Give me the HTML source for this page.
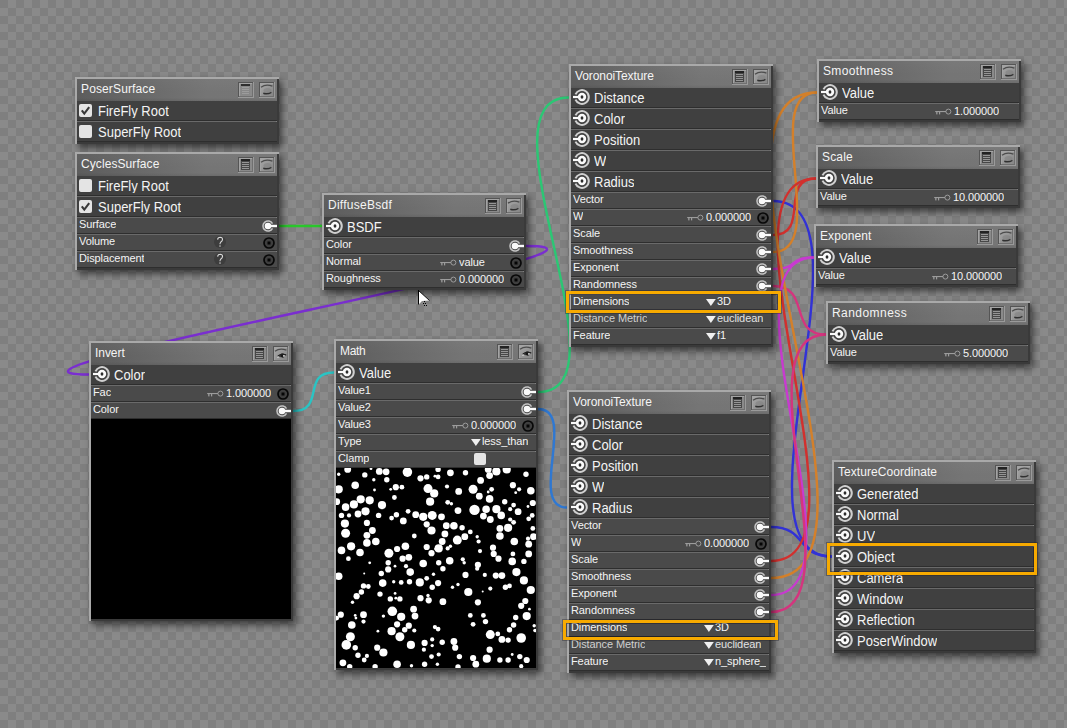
<!DOCTYPE html>
<html><head><meta charset="utf-8"><style>
html,body{margin:0;padding:0;}
body{width:1067px;height:728px;overflow:hidden;position:relative;font-family:"Liberation Sans",sans-serif;color:#f4f4f4;}
.abs{position:absolute;}
.node{position:absolute;width:204px;background:#404040;box-shadow:3px 4px 7px rgba(0,0,0,0.55);}
.bl{position:absolute;left:0;top:0;width:2px;background:#a9a9a9;}
.bt{position:absolute;left:0;top:0;height:2px;background:#a9a9a9;}
.br{position:absolute;right:0;top:2px;width:2px;background:#3a3a3a;}
.bb{position:absolute;left:2px;bottom:0;height:2px;background:#3a3a3a;}
.hdr{position:absolute;left:2px;top:2px;width:200px;height:22px;background:linear-gradient(180deg,rgba(255,255,255,0.03) 0%,rgba(255,255,255,0) 60%,rgba(0,0,0,0) 85%,rgba(0,0,0,0.08) 100%),linear-gradient(100deg,#5c5c5c 0%,#6a6a6a 35%,#757575 65%,#767676 100%);}
.ht{position:absolute;left:4px;top:2px;font-size:12px;line-height:16px;white-space:pre;letter-spacing:0.05px;}
.btn{position:absolute;top:3px;width:16px;height:16px;}
.row{position:absolute;left:2px;width:200px;}
.big{background:#404040;}
.small{background:#4a4a4a;}
.sd{position:absolute;left:0;bottom:0;width:200px;height:1px;background:#2e2e2e;}
.sl{position:absolute;left:0;top:0;width:200px;height:1px;background:#6a6a6a;}
.sl:after{content:'';position:absolute;right:0;top:0;width:1px;height:1px;background:#7e7e7e;}
.bt13{position:absolute;font-size:13px;line-height:15px;height:13.6px;overflow:hidden;white-space:pre;transform:scaleY(1.08);transform-origin:0 3px;}
.st11{position:absolute;font-size:11px;line-height:13px;height:12.2px;overflow:hidden;white-space:pre;letter-spacing:-0.1px;}
.cb{position:absolute;width:13px;height:13px;border-radius:2px;background:#e4e4e4;}
svg.ic{position:absolute;overflow:visible;}
</style></head><body>

<svg class="abs" style="left:0;top:0" width="1067" height="728"><defs><pattern id="chk" width="16" height="16" patternUnits="userSpaceOnUse"><rect width="16" height="16" fill="#8a8a8a"/><rect width="8" height="8" fill="#7f7f7f"/><rect x="8" y="8" width="8" height="8" fill="#7f7f7f"/></pattern></defs><rect width="1067" height="728" fill="url(#chk)"/>
<path d="M322.0,226.0 C296.5,226.0 304.5,226.0 279.0,226.0" fill="none" stroke="#29c72b" stroke-width="2.4"/>
<path d="M89.0,374.5 C-65.0,374.5 680.0,246.0 526.0,246.0" fill="none" stroke="#7a2ed0" stroke-width="2.4"/>
<path d="M334.0,372.5 C301.0,372.5 326.0,411.0 293.0,411.0" fill="none" stroke="#2ac4c4" stroke-width="2.4"/>
<path d="M569.0,97.5 C473.0,97.5 634.0,392.0 538.0,392.0" fill="none" stroke="#2bc774" stroke-width="2.4"/>
<path d="M567.0,507.5 C527.0,507.5 578.0,409.0 538.0,409.0" fill="none" stroke="#2f78d2" stroke-width="2.4"/>
<path d="M832.0,556.5 C724.0,556.5 881.0,201.0 773.0,201.0" fill="none" stroke="#3232d6" stroke-width="2.4"/>
<path d="M816.0,178.5 C778.1,178.5 810.9,235.0 773.0,235.0" fill="none" stroke="#d2302e" stroke-width="2.4"/>
<path d="M817.0,92.5 C759.0,92.5 831.0,252.0 773.0,252.0" fill="none" stroke="#d4802a" stroke-width="2.4"/>
<path d="M814.0,257.5 C786.5,257.5 800.5,269.0 773.0,269.0" fill="none" stroke="#c83ad0" stroke-width="2.4"/>
<path d="M826.0,334.5 C787.3,334.5 811.7,286.0 773.0,286.0" fill="none" stroke="#d4357e" stroke-width="2.4"/>
<path d="M832.0,556.5 C795.4,556.5 807.6,527.0 771.0,527.0" fill="none" stroke="#3232d6" stroke-width="2.4"/>
<path d="M816.0,178.5 C705.0,178.5 882.0,561.0 771.0,561.0" fill="none" stroke="#d2302e" stroke-width="2.4"/>
<path d="M817.0,92.5 C677.0,92.5 911.0,578.0 771.0,578.0" fill="none" stroke="#d4802a" stroke-width="2.4"/>
<path d="M814.0,257.5 C713.0,257.5 872.0,595.0 771.0,595.0" fill="none" stroke="#c83ad0" stroke-width="2.4"/>
<path d="M826.0,334.5 C736.7,334.5 860.3,612.0 771.0,612.0" fill="none" stroke="#d4357e" stroke-width="2.4"/>
</svg>
<svg width="0" height="0" style="position:absolute"><defs>
<g id="so">
 <path d="M-6.5,-2.6 A6.9,6.9 0 1 1 -6.5,2.6" fill="none" stroke="#d0d0d0" stroke-width="2"/>
 <circle r="4.2" fill="#fafafa"/>
 <rect x="-9" y="-1.1" width="6" height="2.2" fill="#fafafa"/>
 <ellipse rx="1.4" ry="1.8" fill="#2a2a2a"/>
</g>
<g id="si">
 <path d="M4.5,-2.3 A5.05,5.05 0 1 0 4.5,2.3" fill="none" stroke="#c4c4c4" stroke-width="1.5"/>
 <circle r="3.3" fill="#fafafa"/>
 <rect x="2" y="-1.2" width="7" height="2.4" fill="#fafafa"/>
</g>
<g id="su">
 <circle r="5" fill="#3e3e3e" stroke="#080808" stroke-width="1.7"/>
 <rect x="-1.5" y="-1.5" width="3" height="3" fill="#050505"/>
</g>
<g id="key">
 <circle cx="13.4" cy="3.6" r="2.5" fill="none" stroke="#9c9c9c" stroke-width="1"/>
 <rect x="0.2" y="3" width="10.8" height="1.1" fill="#9c9c9c"/>
 <rect x="1.2" y="3" width="1.3" height="3.4" fill="#9c9c9c"/>
 <rect x="4" y="3" width="1.2" height="3.4" fill="#9c9c9c"/>
</g>
</defs></svg>
<div class="node" style="left:75px;top:77px;height:67px"><div class="hdr"><div class="ht" style="letter-spacing:0.13px">PoserSurface</div><svg class="btn" style="left:161px" width="16" height="16"><rect width="16" height="16" fill="#8a8a8a"/><rect width="16" height="1" fill="#555"/><rect width="1" height="16" fill="#555"/><rect y="15" width="16" height="1" fill="#9a9a9a"/><rect x="15" width="1" height="16" fill="#9a9a9a"/><rect x="1" y="1" width="14" height="1" fill="#a4a4a4"/><rect x="1" y="1" width="1" height="14" fill="#a4a4a4"/><rect x="1" y="14" width="14" height="1" fill="#707070"/><rect x="14" y="1" width="1" height="14" fill="#707070"/><rect x="3" y="2" width="9" height="11" fill="#878787"/><rect x="3" y="2" width="9" height="2" fill="#2e2e2e"/><rect x="4" y="5" width="7" height="1" fill="#9c9c9c"/><rect x="4" y="7" width="7" height="1" fill="#9c9c9c"/><rect x="4" y="9" width="7" height="1" fill="#9c9c9c"/><rect x="4" y="11" width="7" height="1" fill="#9c9c9c"/></svg><svg class="btn" style="left:182px" width="16" height="16"><rect width="16" height="16" fill="#8a8a8a"/><rect width="16" height="1" fill="#555"/><rect width="1" height="16" fill="#555"/><rect y="15" width="16" height="1" fill="#9a9a9a"/><rect x="15" width="1" height="16" fill="#9a9a9a"/><rect x="1" y="1" width="14" height="1" fill="#a4a4a4"/><rect x="1" y="1" width="1" height="14" fill="#a4a4a4"/><rect x="1" y="14" width="14" height="1" fill="#707070"/><rect x="14" y="1" width="1" height="14" fill="#707070"/><defs><linearGradient id="eg" x1="0" y1="0" x2="1" y2="1"><stop offset="0" stop-color="#a6a6a6"/><stop offset="1" stop-color="#868686"/></linearGradient></defs><rect x="2" y="2" width="12" height="12" fill="url(#eg)"/><path d="M2,5.2 Q7,1.6 13.4,4.2" fill="none" stroke="#4c4c4c" stroke-width="1.3"/><path d="M4.3,11.3 Q8.5,12.6 12.4,10.3" fill="none" stroke="#303030" stroke-width="1.5"/><ellipse cx="8.5" cy="8.5" rx="4" ry="2.5" fill="#7e7e7e" opacity="0.5"/></svg></div><div class="row big" style="top:24px;height:20px"><div class="sd"></div><div class="cb" style="left:2px;top:3px"></div><svg class="ic" style="left:2px;top:3px" width="13" height="13"><path d="M2.8,6.3 L5.3,9.6 L10.2,3.2" fill="none" stroke="#383838" stroke-width="2.1"/></svg><div class="bt13" style="left:21px;top:2px">FireFly Root</div></div><div class="row big" style="top:44px;height:21px"><div class="sl"></div><div class="sd"></div><div class="cb" style="left:2px;top:4px"></div><div class="bt13" style="left:21px;top:3px">SuperFly Root</div></div><div class="bl" style="height:67px"></div><div class="bt" style="width:204px"></div><div class="br" style="height:65px"></div><div class="bb" style="width:202px"></div></div>
<div class="node" style="left:75px;top:152px;height:118px"><div class="hdr"><div class="ht" style="letter-spacing:0.08px">CyclesSurface</div><svg class="btn" style="left:161px" width="16" height="16"><rect width="16" height="16" fill="#8a8a8a"/><rect width="16" height="1" fill="#555"/><rect width="1" height="16" fill="#555"/><rect y="15" width="16" height="1" fill="#9a9a9a"/><rect x="15" width="1" height="16" fill="#9a9a9a"/><rect x="1" y="1" width="14" height="1" fill="#a4a4a4"/><rect x="1" y="1" width="1" height="14" fill="#a4a4a4"/><rect x="1" y="14" width="14" height="1" fill="#707070"/><rect x="14" y="1" width="1" height="14" fill="#707070"/><rect x="3" y="2" width="9" height="11" fill="#474747"/><rect x="3" y="2" width="9" height="2" fill="#222"/><rect x="4" y="5" width="7" height="1" fill="#959595"/><rect x="4" y="7" width="7" height="1" fill="#959595"/><rect x="4" y="9" width="7" height="1" fill="#959595"/><rect x="4" y="11" width="7" height="1" fill="#959595"/></svg><svg class="btn" style="left:182px" width="16" height="16"><rect width="16" height="16" fill="#8a8a8a"/><rect width="16" height="1" fill="#555"/><rect width="1" height="16" fill="#555"/><rect y="15" width="16" height="1" fill="#9a9a9a"/><rect x="15" width="1" height="16" fill="#9a9a9a"/><rect x="1" y="1" width="14" height="1" fill="#a4a4a4"/><rect x="1" y="1" width="1" height="14" fill="#a4a4a4"/><rect x="1" y="14" width="14" height="1" fill="#707070"/><rect x="14" y="1" width="1" height="14" fill="#707070"/><defs><linearGradient id="eg" x1="0" y1="0" x2="1" y2="1"><stop offset="0" stop-color="#a6a6a6"/><stop offset="1" stop-color="#868686"/></linearGradient></defs><rect x="2" y="2" width="12" height="12" fill="url(#eg)"/><path d="M2,5.2 Q7,1.6 13.4,4.2" fill="none" stroke="#4c4c4c" stroke-width="1.3"/><path d="M4.3,11.3 Q8.5,12.6 12.4,10.3" fill="none" stroke="#303030" stroke-width="1.5"/><ellipse cx="8.5" cy="8.5" rx="4" ry="2.5" fill="#7e7e7e" opacity="0.5"/></svg></div><div class="row big" style="top:24px;height:20px"><div class="sd"></div><div class="cb" style="left:2px;top:3px"></div><div class="bt13" style="left:21px;top:2px">FireFly Root</div></div><div class="row big" style="top:44px;height:21px"><div class="sl"></div><div class="sd"></div><div class="cb" style="left:2px;top:4px"></div><svg class="ic" style="left:2px;top:4px" width="13" height="13"><path d="M2.8,6.3 L5.3,9.6 L10.2,3.2" fill="none" stroke="#383838" stroke-width="2.1"/></svg><div class="bt13" style="left:21px;top:3px">SuperFly Root</div></div><div class="row small" style="top:65px;height:17px"><div class="sl"></div><div class="sd"></div><div class="st11" style="left:2px;top:1px">Surface</div><svg class="ic" style="left:182.6px;top:1.9000000000000004px" width="16" height="14" viewBox="-8 -7 16 14"><use href="#si"/></svg></div><div class="row small" style="top:82px;height:17px"><div class="sl"></div><div class="sd"></div><div class="st11" style="left:2px;top:1px">Volume</div><svg class="ic" style="left:136.5px;top:1.4px" width="12" height="14" viewBox="0 0 12 14"><circle cx="6" cy="7" r="6" fill="#3d3d3d"/><path d="M3.6,4.6 Q3.8,2.3 6.2,2.3 Q8.6,2.4 8.5,4.6 Q8.4,6 6.6,7.3 Q6,7.8 6,9.2" fill="none" stroke="#dadada" stroke-width="1.1"/><rect x="5.4" y="10.4" width="1.2" height="1.3" fill="#dadada"/></svg><svg class="ic" style="left:183.9px;top:1.8000000000000007px" width="16" height="14" viewBox="-8 -7 16 14"><use href="#su"/></svg></div><div class="row small" style="top:99px;height:17px"><div class="sl"></div><div class="sd"></div><div class="st11" style="left:2px;top:1px">Displacement</div><svg class="ic" style="left:136.5px;top:1.4px" width="12" height="14" viewBox="0 0 12 14"><circle cx="6" cy="7" r="6" fill="#3d3d3d"/><path d="M3.6,4.6 Q3.8,2.3 6.2,2.3 Q8.6,2.4 8.5,4.6 Q8.4,6 6.6,7.3 Q6,7.8 6,9.2" fill="none" stroke="#dadada" stroke-width="1.1"/><rect x="5.4" y="10.4" width="1.2" height="1.3" fill="#dadada"/></svg><svg class="ic" style="left:183.9px;top:1.8000000000000007px" width="16" height="14" viewBox="-8 -7 16 14"><use href="#su"/></svg></div><div class="bl" style="height:118px"></div><div class="bt" style="width:204px"></div><div class="br" style="height:116px"></div><div class="bb" style="width:202px"></div></div>
<div class="node" style="left:322px;top:193px;height:97px"><div class="hdr"><div class="ht" style="letter-spacing:0.26px">DiffuseBsdf</div><svg class="btn" style="left:161px" width="16" height="16"><rect width="16" height="16" fill="#8a8a8a"/><rect width="16" height="1" fill="#555"/><rect width="1" height="16" fill="#555"/><rect y="15" width="16" height="1" fill="#9a9a9a"/><rect x="15" width="1" height="16" fill="#9a9a9a"/><rect x="1" y="1" width="14" height="1" fill="#a4a4a4"/><rect x="1" y="1" width="1" height="14" fill="#a4a4a4"/><rect x="1" y="14" width="14" height="1" fill="#707070"/><rect x="14" y="1" width="1" height="14" fill="#707070"/><rect x="3" y="2" width="9" height="11" fill="#474747"/><rect x="3" y="2" width="9" height="2" fill="#222"/><rect x="4" y="5" width="7" height="1" fill="#959595"/><rect x="4" y="7" width="7" height="1" fill="#959595"/><rect x="4" y="9" width="7" height="1" fill="#959595"/><rect x="4" y="11" width="7" height="1" fill="#959595"/></svg><svg class="btn" style="left:182px" width="16" height="16"><rect width="16" height="16" fill="#8a8a8a"/><rect width="16" height="1" fill="#555"/><rect width="1" height="16" fill="#555"/><rect y="15" width="16" height="1" fill="#9a9a9a"/><rect x="15" width="1" height="16" fill="#9a9a9a"/><rect x="1" y="1" width="14" height="1" fill="#a4a4a4"/><rect x="1" y="1" width="1" height="14" fill="#a4a4a4"/><rect x="1" y="14" width="14" height="1" fill="#707070"/><rect x="14" y="1" width="1" height="14" fill="#707070"/><defs><linearGradient id="eg" x1="0" y1="0" x2="1" y2="1"><stop offset="0" stop-color="#a6a6a6"/><stop offset="1" stop-color="#868686"/></linearGradient></defs><rect x="2" y="2" width="12" height="12" fill="url(#eg)"/><path d="M2,5.2 Q7,1.6 13.4,4.2" fill="none" stroke="#4c4c4c" stroke-width="1.3"/><path d="M4.3,11.3 Q8.5,12.6 12.4,10.3" fill="none" stroke="#303030" stroke-width="1.5"/><ellipse cx="8.5" cy="8.5" rx="4" ry="2.5" fill="#7e7e7e" opacity="0.5"/></svg></div><div class="row big" style="top:24px;height:20px"><div class="sd"></div><svg class="ic" style="left:1px;top:1.0px" width="20" height="16" viewBox="-10 -8 20 16"><use href="#so"/></svg><div class="bt13" style="left:23px;top:2px">BSDF</div></div><div class="row small" style="top:44px;height:17px"><div class="sl"></div><div class="sd"></div><div class="st11" style="left:2px;top:1px">Color</div><svg class="ic" style="left:182.6px;top:1.9000000000000004px" width="16" height="14" viewBox="-8 -7 16 14"><use href="#si"/></svg></div><div class="row small" style="top:61px;height:17px"><div class="sl"></div><div class="sd"></div><div class="st11" style="left:2px;top:1px">Normal</div><svg class="ic" style="left:116px;top:4.5px" width="17" height="8" viewBox="0 0 17 8"><use href="#key"/></svg><div class="st11" style="left:135px;top:2px">value</div><svg class="ic" style="left:183.9px;top:1.8000000000000007px" width="16" height="14" viewBox="-8 -7 16 14"><use href="#su"/></svg></div><div class="row small" style="top:78px;height:17px"><div class="sl"></div><div class="sd"></div><div class="st11" style="left:2px;top:1px">Roughness</div><svg class="ic" style="left:116px;top:4.5px" width="17" height="8" viewBox="0 0 17 8"><use href="#key"/></svg><div class="st11" style="left:135px;top:2px">0.000000</div><svg class="ic" style="left:183.9px;top:1.8000000000000007px" width="16" height="14" viewBox="-8 -7 16 14"><use href="#su"/></svg></div><div class="bl" style="height:97px"></div><div class="bt" style="width:204px"></div><div class="br" style="height:95px"></div><div class="bb" style="width:202px"></div></div>
<div class="node" style="left:569px;top:64px;height:283px"><div class="hdr"><div class="ht" style="letter-spacing:-0.09px">VoronoiTexture</div><svg class="btn" style="left:161px" width="16" height="16"><rect width="16" height="16" fill="#8a8a8a"/><rect width="16" height="1" fill="#555"/><rect width="1" height="16" fill="#555"/><rect y="15" width="16" height="1" fill="#9a9a9a"/><rect x="15" width="1" height="16" fill="#9a9a9a"/><rect x="1" y="1" width="14" height="1" fill="#a4a4a4"/><rect x="1" y="1" width="1" height="14" fill="#a4a4a4"/><rect x="1" y="14" width="14" height="1" fill="#707070"/><rect x="14" y="1" width="1" height="14" fill="#707070"/><rect x="3" y="2" width="9" height="11" fill="#474747"/><rect x="3" y="2" width="9" height="2" fill="#222"/><rect x="4" y="5" width="7" height="1" fill="#959595"/><rect x="4" y="7" width="7" height="1" fill="#959595"/><rect x="4" y="9" width="7" height="1" fill="#959595"/><rect x="4" y="11" width="7" height="1" fill="#959595"/></svg><svg class="btn" style="left:182px" width="16" height="16"><rect width="16" height="16" fill="#8a8a8a"/><rect width="16" height="1" fill="#555"/><rect width="1" height="16" fill="#555"/><rect y="15" width="16" height="1" fill="#9a9a9a"/><rect x="15" width="1" height="16" fill="#9a9a9a"/><rect x="1" y="1" width="14" height="1" fill="#a4a4a4"/><rect x="1" y="1" width="1" height="14" fill="#a4a4a4"/><rect x="1" y="14" width="14" height="1" fill="#707070"/><rect x="14" y="1" width="1" height="14" fill="#707070"/><defs><linearGradient id="eg" x1="0" y1="0" x2="1" y2="1"><stop offset="0" stop-color="#a6a6a6"/><stop offset="1" stop-color="#868686"/></linearGradient></defs><rect x="2" y="2" width="12" height="12" fill="url(#eg)"/><path d="M2,5.2 Q7,1.6 13.4,4.2" fill="none" stroke="#4c4c4c" stroke-width="1.3"/><path d="M4.3,11.3 Q8.5,12.6 12.4,10.3" fill="none" stroke="#303030" stroke-width="1.5"/><ellipse cx="8.5" cy="8.5" rx="4" ry="2.5" fill="#7e7e7e" opacity="0.5"/></svg></div><div class="row big" style="top:24px;height:20px"><div class="sd"></div><svg class="ic" style="left:1px;top:1.0px" width="20" height="16" viewBox="-10 -8 20 16"><use href="#so"/></svg><div class="bt13" style="left:23px;top:2px">Distance</div></div><div class="row big" style="top:44px;height:21px"><div class="sl"></div><div class="sd"></div><svg class="ic" style="left:1px;top:2.0px" width="20" height="16" viewBox="-10 -8 20 16"><use href="#so"/></svg><div class="bt13" style="left:23px;top:3px">Color</div></div><div class="row big" style="top:65px;height:21px"><div class="sl"></div><div class="sd"></div><svg class="ic" style="left:1px;top:2.0px" width="20" height="16" viewBox="-10 -8 20 16"><use href="#so"/></svg><div class="bt13" style="left:23px;top:3px">Position</div></div><div class="row big" style="top:86px;height:21px"><div class="sl"></div><div class="sd"></div><svg class="ic" style="left:1px;top:2.0px" width="20" height="16" viewBox="-10 -8 20 16"><use href="#so"/></svg><div class="bt13" style="left:23px;top:3px">W</div></div><div class="row big" style="top:107px;height:21px"><div class="sl"></div><div class="sd"></div><svg class="ic" style="left:1px;top:2.0px" width="20" height="16" viewBox="-10 -8 20 16"><use href="#so"/></svg><div class="bt13" style="left:23px;top:3px">Radius</div></div><div class="row small" style="top:128px;height:17px"><div class="sl"></div><div class="sd"></div><div class="st11" style="left:2px;top:1px">Vector</div><svg class="ic" style="left:182.6px;top:1.9000000000000004px" width="16" height="14" viewBox="-8 -7 16 14"><use href="#si"/></svg></div><div class="row small" style="top:145px;height:17px"><div class="sl"></div><div class="sd"></div><div class="st11" style="left:2px;top:1px">W</div><svg class="ic" style="left:116px;top:4.5px" width="17" height="8" viewBox="0 0 17 8"><use href="#key"/></svg><div class="st11" style="left:135px;top:2px">0.000000</div><svg class="ic" style="left:183.9px;top:1.8000000000000007px" width="16" height="14" viewBox="-8 -7 16 14"><use href="#su"/></svg></div><div class="row small" style="top:162px;height:17px"><div class="sl"></div><div class="sd"></div><div class="st11" style="left:2px;top:1px">Scale</div><svg class="ic" style="left:182.6px;top:1.9000000000000004px" width="16" height="14" viewBox="-8 -7 16 14"><use href="#si"/></svg></div><div class="row small" style="top:179px;height:17px"><div class="sl"></div><div class="sd"></div><div class="st11" style="left:2px;top:1px">Smoothness</div><svg class="ic" style="left:182.6px;top:1.9000000000000004px" width="16" height="14" viewBox="-8 -7 16 14"><use href="#si"/></svg></div><div class="row small" style="top:196px;height:17px"><div class="sl"></div><div class="sd"></div><div class="st11" style="left:2px;top:1px">Exponent</div><svg class="ic" style="left:182.6px;top:1.9000000000000004px" width="16" height="14" viewBox="-8 -7 16 14"><use href="#si"/></svg></div><div class="row small" style="top:213px;height:17px"><div class="sl"></div><div class="sd"></div><div class="st11" style="left:2px;top:1px">Randomness</div><svg class="ic" style="left:182.6px;top:1.9000000000000004px" width="16" height="14" viewBox="-8 -7 16 14"><use href="#si"/></svg></div><div class="row small" style="top:230px;height:17px"><div class="sl"></div><div class="sd"></div><div class="st11" style="left:2px;top:1px">Dimensions</div><svg class="ic" style="left:135.4px;top:5px" width="11" height="8"><path d="M0,0 L9.8,0 L4.9,7 Z" fill="#f0f0f0"/></svg><div class="st11" style="left:146px;top:1px;color:#f4f4f4">3D</div></div><div class="row small" style="top:247px;height:17px"><div class="sl"></div><div class="sd"></div><div class="st11" style="left:2px;top:1px;color:#d0d0d0">Distance Metric</div><svg class="ic" style="left:135.4px;top:5px" width="11" height="8"><path d="M0,0 L9.8,0 L4.9,7 Z" fill="#f0f0f0"/></svg><div class="st11" style="left:146px;top:1px;color:#e2e2e2">euclidean</div></div><div class="row small" style="top:264px;height:17px"><div class="sl"></div><div class="sd"></div><div class="st11" style="left:2px;top:1px">Feature</div><svg class="ic" style="left:135.4px;top:5px" width="11" height="8"><path d="M0,0 L9.8,0 L4.9,7 Z" fill="#f0f0f0"/></svg><div class="st11" style="left:146px;top:1px;color:#f4f4f4">f1</div></div><div class="bl" style="height:283px"></div><div class="bt" style="width:204px"></div><div class="br" style="height:281px"></div><div class="bb" style="width:202px"></div></div>
<div class="node" style="left:817px;top:59px;height:63px"><div class="hdr"><div class="ht" style="letter-spacing:0.37px">Smoothness</div><svg class="btn" style="left:161px" width="16" height="16"><rect width="16" height="16" fill="#8a8a8a"/><rect width="16" height="1" fill="#555"/><rect width="1" height="16" fill="#555"/><rect y="15" width="16" height="1" fill="#9a9a9a"/><rect x="15" width="1" height="16" fill="#9a9a9a"/><rect x="1" y="1" width="14" height="1" fill="#a4a4a4"/><rect x="1" y="1" width="1" height="14" fill="#a4a4a4"/><rect x="1" y="14" width="14" height="1" fill="#707070"/><rect x="14" y="1" width="1" height="14" fill="#707070"/><rect x="3" y="2" width="9" height="11" fill="#474747"/><rect x="3" y="2" width="9" height="2" fill="#222"/><rect x="4" y="5" width="7" height="1" fill="#959595"/><rect x="4" y="7" width="7" height="1" fill="#959595"/><rect x="4" y="9" width="7" height="1" fill="#959595"/><rect x="4" y="11" width="7" height="1" fill="#959595"/></svg><svg class="btn" style="left:182px" width="16" height="16"><rect width="16" height="16" fill="#8a8a8a"/><rect width="16" height="1" fill="#555"/><rect width="1" height="16" fill="#555"/><rect y="15" width="16" height="1" fill="#9a9a9a"/><rect x="15" width="1" height="16" fill="#9a9a9a"/><rect x="1" y="1" width="14" height="1" fill="#a4a4a4"/><rect x="1" y="1" width="1" height="14" fill="#a4a4a4"/><rect x="1" y="14" width="14" height="1" fill="#707070"/><rect x="14" y="1" width="1" height="14" fill="#707070"/><defs><linearGradient id="eg" x1="0" y1="0" x2="1" y2="1"><stop offset="0" stop-color="#a6a6a6"/><stop offset="1" stop-color="#868686"/></linearGradient></defs><rect x="2" y="2" width="12" height="12" fill="url(#eg)"/><path d="M2,5.2 Q7,1.6 13.4,4.2" fill="none" stroke="#4c4c4c" stroke-width="1.3"/><path d="M4.3,11.3 Q8.5,12.6 12.4,10.3" fill="none" stroke="#303030" stroke-width="1.5"/><ellipse cx="8.5" cy="8.5" rx="4" ry="2.5" fill="#7e7e7e" opacity="0.5"/></svg></div><div class="row big" style="top:24px;height:20px"><div class="sd"></div><svg class="ic" style="left:1px;top:1.0px" width="20" height="16" viewBox="-10 -8 20 16"><use href="#so"/></svg><div class="bt13" style="left:23px;top:2px">Value</div></div><div class="row small" style="top:44px;height:17px"><div class="sl"></div><div class="sd"></div><div class="st11" style="left:2px;top:1px">Value</div><svg class="ic" style="left:116px;top:4.5px" width="17" height="8" viewBox="0 0 17 8"><use href="#key"/></svg><div class="st11" style="left:135px;top:2px">1.000000</div></div><div class="bl" style="height:63px"></div><div class="bt" style="width:204px"></div><div class="br" style="height:61px"></div><div class="bb" style="width:202px"></div></div>
<div class="node" style="left:816px;top:145px;height:63px"><div class="hdr"><div class="ht" style="letter-spacing:0.15px">Scale</div><svg class="btn" style="left:161px" width="16" height="16"><rect width="16" height="16" fill="#8a8a8a"/><rect width="16" height="1" fill="#555"/><rect width="1" height="16" fill="#555"/><rect y="15" width="16" height="1" fill="#9a9a9a"/><rect x="15" width="1" height="16" fill="#9a9a9a"/><rect x="1" y="1" width="14" height="1" fill="#a4a4a4"/><rect x="1" y="1" width="1" height="14" fill="#a4a4a4"/><rect x="1" y="14" width="14" height="1" fill="#707070"/><rect x="14" y="1" width="1" height="14" fill="#707070"/><rect x="3" y="2" width="9" height="11" fill="#474747"/><rect x="3" y="2" width="9" height="2" fill="#222"/><rect x="4" y="5" width="7" height="1" fill="#959595"/><rect x="4" y="7" width="7" height="1" fill="#959595"/><rect x="4" y="9" width="7" height="1" fill="#959595"/><rect x="4" y="11" width="7" height="1" fill="#959595"/></svg><svg class="btn" style="left:182px" width="16" height="16"><rect width="16" height="16" fill="#8a8a8a"/><rect width="16" height="1" fill="#555"/><rect width="1" height="16" fill="#555"/><rect y="15" width="16" height="1" fill="#9a9a9a"/><rect x="15" width="1" height="16" fill="#9a9a9a"/><rect x="1" y="1" width="14" height="1" fill="#a4a4a4"/><rect x="1" y="1" width="1" height="14" fill="#a4a4a4"/><rect x="1" y="14" width="14" height="1" fill="#707070"/><rect x="14" y="1" width="1" height="14" fill="#707070"/><defs><linearGradient id="eg" x1="0" y1="0" x2="1" y2="1"><stop offset="0" stop-color="#a6a6a6"/><stop offset="1" stop-color="#868686"/></linearGradient></defs><rect x="2" y="2" width="12" height="12" fill="url(#eg)"/><path d="M2,5.2 Q7,1.6 13.4,4.2" fill="none" stroke="#4c4c4c" stroke-width="1.3"/><path d="M4.3,11.3 Q8.5,12.6 12.4,10.3" fill="none" stroke="#303030" stroke-width="1.5"/><ellipse cx="8.5" cy="8.5" rx="4" ry="2.5" fill="#7e7e7e" opacity="0.5"/></svg></div><div class="row big" style="top:24px;height:20px"><div class="sd"></div><svg class="ic" style="left:1px;top:1.0px" width="20" height="16" viewBox="-10 -8 20 16"><use href="#so"/></svg><div class="bt13" style="left:23px;top:2px">Value</div></div><div class="row small" style="top:44px;height:17px"><div class="sl"></div><div class="sd"></div><div class="st11" style="left:2px;top:1px">Value</div><svg class="ic" style="left:116px;top:4.5px" width="17" height="8" viewBox="0 0 17 8"><use href="#key"/></svg><div class="st11" style="left:135px;top:2px">10.000000</div></div><div class="bl" style="height:63px"></div><div class="bt" style="width:204px"></div><div class="br" style="height:61px"></div><div class="bb" style="width:202px"></div></div>
<div class="node" style="left:814px;top:224px;height:63px"><div class="hdr"><div class="ht" style="letter-spacing:0.09px">Exponent</div><svg class="btn" style="left:161px" width="16" height="16"><rect width="16" height="16" fill="#8a8a8a"/><rect width="16" height="1" fill="#555"/><rect width="1" height="16" fill="#555"/><rect y="15" width="16" height="1" fill="#9a9a9a"/><rect x="15" width="1" height="16" fill="#9a9a9a"/><rect x="1" y="1" width="14" height="1" fill="#a4a4a4"/><rect x="1" y="1" width="1" height="14" fill="#a4a4a4"/><rect x="1" y="14" width="14" height="1" fill="#707070"/><rect x="14" y="1" width="1" height="14" fill="#707070"/><rect x="3" y="2" width="9" height="11" fill="#474747"/><rect x="3" y="2" width="9" height="2" fill="#222"/><rect x="4" y="5" width="7" height="1" fill="#959595"/><rect x="4" y="7" width="7" height="1" fill="#959595"/><rect x="4" y="9" width="7" height="1" fill="#959595"/><rect x="4" y="11" width="7" height="1" fill="#959595"/></svg><svg class="btn" style="left:182px" width="16" height="16"><rect width="16" height="16" fill="#8a8a8a"/><rect width="16" height="1" fill="#555"/><rect width="1" height="16" fill="#555"/><rect y="15" width="16" height="1" fill="#9a9a9a"/><rect x="15" width="1" height="16" fill="#9a9a9a"/><rect x="1" y="1" width="14" height="1" fill="#a4a4a4"/><rect x="1" y="1" width="1" height="14" fill="#a4a4a4"/><rect x="1" y="14" width="14" height="1" fill="#707070"/><rect x="14" y="1" width="1" height="14" fill="#707070"/><defs><linearGradient id="eg" x1="0" y1="0" x2="1" y2="1"><stop offset="0" stop-color="#a6a6a6"/><stop offset="1" stop-color="#868686"/></linearGradient></defs><rect x="2" y="2" width="12" height="12" fill="url(#eg)"/><path d="M2,5.2 Q7,1.6 13.4,4.2" fill="none" stroke="#4c4c4c" stroke-width="1.3"/><path d="M4.3,11.3 Q8.5,12.6 12.4,10.3" fill="none" stroke="#303030" stroke-width="1.5"/><ellipse cx="8.5" cy="8.5" rx="4" ry="2.5" fill="#7e7e7e" opacity="0.5"/></svg></div><div class="row big" style="top:24px;height:20px"><div class="sd"></div><svg class="ic" style="left:1px;top:1.0px" width="20" height="16" viewBox="-10 -8 20 16"><use href="#so"/></svg><div class="bt13" style="left:23px;top:2px">Value</div></div><div class="row small" style="top:44px;height:17px"><div class="sl"></div><div class="sd"></div><div class="st11" style="left:2px;top:1px">Value</div><svg class="ic" style="left:116px;top:4.5px" width="17" height="8" viewBox="0 0 17 8"><use href="#key"/></svg><div class="st11" style="left:135px;top:2px">10.000000</div></div><div class="bl" style="height:63px"></div><div class="bt" style="width:204px"></div><div class="br" style="height:61px"></div><div class="bb" style="width:202px"></div></div>
<div class="node" style="left:826px;top:301px;height:63px"><div class="hdr"><div class="ht" style="letter-spacing:0.45px">Randomness</div><svg class="btn" style="left:161px" width="16" height="16"><rect width="16" height="16" fill="#8a8a8a"/><rect width="16" height="1" fill="#555"/><rect width="1" height="16" fill="#555"/><rect y="15" width="16" height="1" fill="#9a9a9a"/><rect x="15" width="1" height="16" fill="#9a9a9a"/><rect x="1" y="1" width="14" height="1" fill="#a4a4a4"/><rect x="1" y="1" width="1" height="14" fill="#a4a4a4"/><rect x="1" y="14" width="14" height="1" fill="#707070"/><rect x="14" y="1" width="1" height="14" fill="#707070"/><rect x="3" y="2" width="9" height="11" fill="#474747"/><rect x="3" y="2" width="9" height="2" fill="#222"/><rect x="4" y="5" width="7" height="1" fill="#959595"/><rect x="4" y="7" width="7" height="1" fill="#959595"/><rect x="4" y="9" width="7" height="1" fill="#959595"/><rect x="4" y="11" width="7" height="1" fill="#959595"/></svg><svg class="btn" style="left:182px" width="16" height="16"><rect width="16" height="16" fill="#8a8a8a"/><rect width="16" height="1" fill="#555"/><rect width="1" height="16" fill="#555"/><rect y="15" width="16" height="1" fill="#9a9a9a"/><rect x="15" width="1" height="16" fill="#9a9a9a"/><rect x="1" y="1" width="14" height="1" fill="#a4a4a4"/><rect x="1" y="1" width="1" height="14" fill="#a4a4a4"/><rect x="1" y="14" width="14" height="1" fill="#707070"/><rect x="14" y="1" width="1" height="14" fill="#707070"/><defs><linearGradient id="eg" x1="0" y1="0" x2="1" y2="1"><stop offset="0" stop-color="#a6a6a6"/><stop offset="1" stop-color="#868686"/></linearGradient></defs><rect x="2" y="2" width="12" height="12" fill="url(#eg)"/><path d="M2,5.2 Q7,1.6 13.4,4.2" fill="none" stroke="#4c4c4c" stroke-width="1.3"/><path d="M4.3,11.3 Q8.5,12.6 12.4,10.3" fill="none" stroke="#303030" stroke-width="1.5"/><ellipse cx="8.5" cy="8.5" rx="4" ry="2.5" fill="#7e7e7e" opacity="0.5"/></svg></div><div class="row big" style="top:24px;height:20px"><div class="sd"></div><svg class="ic" style="left:1px;top:1.0px" width="20" height="16" viewBox="-10 -8 20 16"><use href="#so"/></svg><div class="bt13" style="left:23px;top:2px">Value</div></div><div class="row small" style="top:44px;height:17px"><div class="sl"></div><div class="sd"></div><div class="st11" style="left:2px;top:1px">Value</div><svg class="ic" style="left:116px;top:4.5px" width="17" height="8" viewBox="0 0 17 8"><use href="#key"/></svg><div class="st11" style="left:135px;top:2px">5.000000</div></div><div class="bl" style="height:63px"></div><div class="bt" style="width:204px"></div><div class="br" style="height:61px"></div><div class="bb" style="width:202px"></div></div>
<div class="node" style="left:89px;top:341px;height:280px"><div class="hdr"><div class="ht" style="letter-spacing:-0.05px">Invert</div><svg class="btn" style="left:161px" width="16" height="16"><rect width="16" height="16" fill="#8a8a8a"/><rect width="16" height="1" fill="#555"/><rect width="1" height="16" fill="#555"/><rect y="15" width="16" height="1" fill="#9a9a9a"/><rect x="15" width="1" height="16" fill="#9a9a9a"/><rect x="1" y="1" width="14" height="1" fill="#a4a4a4"/><rect x="1" y="1" width="1" height="14" fill="#a4a4a4"/><rect x="1" y="14" width="14" height="1" fill="#707070"/><rect x="14" y="1" width="1" height="14" fill="#707070"/><rect x="3" y="2" width="9" height="11" fill="#474747"/><rect x="3" y="2" width="9" height="2" fill="#222"/><rect x="4" y="5" width="7" height="1" fill="#959595"/><rect x="4" y="7" width="7" height="1" fill="#959595"/><rect x="4" y="9" width="7" height="1" fill="#959595"/><rect x="4" y="11" width="7" height="1" fill="#959595"/></svg><svg class="btn" style="left:182px" width="16" height="16"><rect width="16" height="16" fill="#8a8a8a"/><rect width="16" height="1" fill="#555"/><rect width="1" height="16" fill="#555"/><rect y="15" width="16" height="1" fill="#9a9a9a"/><rect x="15" width="1" height="16" fill="#9a9a9a"/><rect x="1" y="1" width="14" height="1" fill="#a4a4a4"/><rect x="1" y="1" width="1" height="14" fill="#a4a4a4"/><rect x="1" y="14" width="14" height="1" fill="#707070"/><rect x="14" y="1" width="1" height="14" fill="#707070"/><defs><linearGradient id="eg" x1="0" y1="0" x2="1" y2="1"><stop offset="0" stop-color="#a6a6a6"/><stop offset="1" stop-color="#868686"/></linearGradient></defs><rect x="2" y="2" width="12" height="12" fill="url(#eg)"/><path d="M2,5.2 Q7,1.6 13.4,4.2" fill="none" stroke="#4c4c4c" stroke-width="1.3"/><path d="M4.6,10.2 Q8.6,6.6 13.3,9 Q9.6,12.6 4.6,10.2 Z" fill="#3a3a3a"/><circle cx="9.8" cy="9.6" r="2.1" fill="#181818"/><rect x="10.2" y="8.9" width="1.5" height="1.9" fill="#e4e4e4"/><rect x="4" y="10.4" width="2.2" height="1.6" fill="#bdbdbd"/><path d="M4.6,9.9 Q8.6,6.4 13.3,8.8" fill="none" stroke="#222" stroke-width="1"/></svg></div><div class="row big" style="top:24px;height:20px"><div class="sd"></div><svg class="ic" style="left:1px;top:1.0px" width="20" height="16" viewBox="-10 -8 20 16"><use href="#so"/></svg><div class="bt13" style="left:23px;top:2px">Color</div></div><div class="row small" style="top:44px;height:17px"><div class="sl"></div><div class="sd"></div><div class="st11" style="left:2px;top:1px">Fac</div><svg class="ic" style="left:116px;top:4.5px" width="17" height="8" viewBox="0 0 17 8"><use href="#key"/></svg><div class="st11" style="left:135px;top:2px">1.000000</div><svg class="ic" style="left:183.9px;top:1.8000000000000007px" width="16" height="14" viewBox="-8 -7 16 14"><use href="#su"/></svg></div><div class="row small" style="top:61px;height:17px"><div class="sl"></div><div class="sd"></div><div class="st11" style="left:2px;top:1px">Color</div><svg class="ic" style="left:182.6px;top:1.9000000000000004px" width="16" height="14" viewBox="-8 -7 16 14"><use href="#si"/></svg></div><div class="abs" style="left:2px;top:78px;width:200px;height:200px;background:#000"></div><div class="bl" style="height:280px"></div><div class="bt" style="width:204px"></div><div class="br" style="height:278px"></div><div class="bb" style="width:202px"></div></div>
<div class="node" style="left:334px;top:339px;height:331px"><div class="hdr"><div class="ht" style="letter-spacing:-0.30px">Math</div><svg class="btn" style="left:161px" width="16" height="16"><rect width="16" height="16" fill="#8a8a8a"/><rect width="16" height="1" fill="#555"/><rect width="1" height="16" fill="#555"/><rect y="15" width="16" height="1" fill="#9a9a9a"/><rect x="15" width="1" height="16" fill="#9a9a9a"/><rect x="1" y="1" width="14" height="1" fill="#a4a4a4"/><rect x="1" y="1" width="1" height="14" fill="#a4a4a4"/><rect x="1" y="14" width="14" height="1" fill="#707070"/><rect x="14" y="1" width="1" height="14" fill="#707070"/><rect x="3" y="2" width="9" height="11" fill="#474747"/><rect x="3" y="2" width="9" height="2" fill="#222"/><rect x="4" y="5" width="7" height="1" fill="#959595"/><rect x="4" y="7" width="7" height="1" fill="#959595"/><rect x="4" y="9" width="7" height="1" fill="#959595"/><rect x="4" y="11" width="7" height="1" fill="#959595"/></svg><svg class="btn" style="left:182px" width="16" height="16"><rect width="16" height="16" fill="#8a8a8a"/><rect width="16" height="1" fill="#555"/><rect width="1" height="16" fill="#555"/><rect y="15" width="16" height="1" fill="#9a9a9a"/><rect x="15" width="1" height="16" fill="#9a9a9a"/><rect x="1" y="1" width="14" height="1" fill="#a4a4a4"/><rect x="1" y="1" width="1" height="14" fill="#a4a4a4"/><rect x="1" y="14" width="14" height="1" fill="#707070"/><rect x="14" y="1" width="1" height="14" fill="#707070"/><defs><linearGradient id="eg" x1="0" y1="0" x2="1" y2="1"><stop offset="0" stop-color="#a6a6a6"/><stop offset="1" stop-color="#868686"/></linearGradient></defs><rect x="2" y="2" width="12" height="12" fill="url(#eg)"/><path d="M2,5.2 Q7,1.6 13.4,4.2" fill="none" stroke="#4c4c4c" stroke-width="1.3"/><path d="M4.6,10.2 Q8.6,6.6 13.3,9 Q9.6,12.6 4.6,10.2 Z" fill="#3a3a3a"/><circle cx="9.8" cy="9.6" r="2.1" fill="#181818"/><rect x="10.2" y="8.9" width="1.5" height="1.9" fill="#e4e4e4"/><rect x="4" y="10.4" width="2.2" height="1.6" fill="#bdbdbd"/><path d="M4.6,9.9 Q8.6,6.4 13.3,8.8" fill="none" stroke="#222" stroke-width="1"/></svg></div><div class="row big" style="top:24px;height:20px"><div class="sd"></div><svg class="ic" style="left:1px;top:1.0px" width="20" height="16" viewBox="-10 -8 20 16"><use href="#so"/></svg><div class="bt13" style="left:23px;top:2px">Value</div></div><div class="row small" style="top:44px;height:17px"><div class="sl"></div><div class="sd"></div><div class="st11" style="left:2px;top:1px">Value1</div><svg class="ic" style="left:182.6px;top:1.9000000000000004px" width="16" height="14" viewBox="-8 -7 16 14"><use href="#si"/></svg></div><div class="row small" style="top:61px;height:17px"><div class="sl"></div><div class="sd"></div><div class="st11" style="left:2px;top:1px">Value2</div><svg class="ic" style="left:182.6px;top:1.9000000000000004px" width="16" height="14" viewBox="-8 -7 16 14"><use href="#si"/></svg></div><div class="row small" style="top:78px;height:17px"><div class="sl"></div><div class="sd"></div><div class="st11" style="left:2px;top:1px">Value3</div><svg class="ic" style="left:116px;top:4.5px" width="17" height="8" viewBox="0 0 17 8"><use href="#key"/></svg><div class="st11" style="left:135px;top:2px">0.000000</div><svg class="ic" style="left:183.9px;top:1.8000000000000007px" width="16" height="14" viewBox="-8 -7 16 14"><use href="#su"/></svg></div><div class="row small" style="top:95px;height:17px"><div class="sl"></div><div class="sd"></div><div class="st11" style="left:2px;top:1px">Type</div><svg class="ic" style="left:135.4px;top:5px" width="11" height="8"><path d="M0,0 L9.8,0 L4.9,7 Z" fill="#f0f0f0"/></svg><div class="st11" style="left:146px;top:1px;color:#f4f4f4">less_than</div></div><div class="row small" style="top:112px;height:17px"><div class="sl"></div><div class="sd"></div><div class="st11" style="left:2px;top:1px">Clamp</div><div class="cb" style="left:138px;top:2px;width:12px;height:12px"></div></div><svg class="abs" style="left:2px;top:129px" width="200" height="200"><rect width="200" height="200" fill="#000"/><circle cx="11.7" cy="1.4" r="3.4" fill="#fff"/><circle cx="2.7" cy="6.2" r="1.7" fill="#fff"/><circle cx="28.8" cy="6.9" r="2.7" fill="#fff"/><circle cx="43.3" cy="3.4" r="3.4" fill="#fff"/><circle cx="50.1" cy="3.8" r="3.4" fill="#fff"/><circle cx="71.4" cy="4.1" r="4.8" fill="#fff"/><circle cx="35" cy="0.7" r="1.4" fill="#fff"/><circle cx="37.8" cy="11.7" r="1.7" fill="#fff"/><circle cx="50.8" cy="11.7" r="2.7" fill="#fff"/><circle cx="84.5" cy="10.3" r="3.1" fill="#fff"/><circle cx="90.7" cy="8.9" r="2.7" fill="#fff"/><circle cx="98.9" cy="8.2" r="1.4" fill="#fff"/><circle cx="19.2" cy="17.2" r="3.8" fill="#fff"/><circle cx="2.7" cy="21.3" r="4.1" fill="#fff"/><circle cx="59.8" cy="19.2" r="3.1" fill="#fff"/><circle cx="65.9" cy="19.2" r="2.4" fill="#fff"/><circle cx="54.7" cy="21.3" r="1.4" fill="#fff"/><circle cx="38.5" cy="22" r="1.4" fill="#fff"/><circle cx="92" cy="20.6" r="4.5" fill="#fff"/><circle cx="98.2" cy="25.4" r="4.1" fill="#fff"/><circle cx="58.4" cy="29.5" r="2.4" fill="#fff"/><circle cx="24.7" cy="31.3" r="4.1" fill="#fff"/><circle cx="33.7" cy="32.3" r="4.1" fill="#fff"/><circle cx="0.7" cy="33.7" r="3.4" fill="#fff"/><circle cx="17.9" cy="36.4" r="4.1" fill="#fff"/><circle cx="9.6" cy="39.1" r="3.8" fill="#fff"/><circle cx="46" cy="37.1" r="4.1" fill="#fff"/><circle cx="94.1" cy="33.7" r="4.1" fill="#fff"/><circle cx="29.5" cy="43.3" r="4.1" fill="#fff"/><circle cx="22" cy="46" r="3.4" fill="#fff"/><circle cx="5.5" cy="47.4" r="2.7" fill="#fff"/><circle cx="13" cy="47.4" r="2.1" fill="#fff"/><circle cx="42.6" cy="47.4" r="2.7" fill="#fff"/><circle cx="72.1" cy="43.3" r="2.4" fill="#fff"/><circle cx="60.4" cy="46.7" r="2.7" fill="#fff"/><circle cx="55.6" cy="50.1" r="2.4" fill="#fff"/><circle cx="79.7" cy="46.7" r="3.4" fill="#fff"/><circle cx="87.2" cy="48.8" r="4.1" fill="#fff"/><circle cx="96.2" cy="47.4" r="4.5" fill="#fff"/><circle cx="67.3" cy="52.9" r="3.4" fill="#fff"/><circle cx="8.9" cy="55.6" r="4.1" fill="#fff"/><circle cx="30.9" cy="54.9" r="3.1" fill="#fff"/><circle cx="90.7" cy="56.3" r="3.1" fill="#fff"/><circle cx="95.5" cy="62.5" r="4.1" fill="#fff"/><circle cx="9.6" cy="65.2" r="4.5" fill="#fff"/><circle cx="36.4" cy="62.5" r="3.4" fill="#fff"/><circle cx="30.9" cy="67.3" r="3.4" fill="#fff"/><circle cx="78.3" cy="68" r="2.4" fill="#fff"/><circle cx="30.9" cy="74.9" r="3.8" fill="#fff"/><circle cx="39.8" cy="73.5" r="3.8" fill="#fff"/><circle cx="15.1" cy="78.3" r="4.1" fill="#fff"/><circle cx="5.5" cy="82.4" r="3.8" fill="#fff"/><circle cx="24" cy="84.5" r="3.8" fill="#fff"/><circle cx="52.9" cy="85.2" r="4.5" fill="#fff"/><circle cx="61.1" cy="81" r="3.1" fill="#fff"/><circle cx="69.4" cy="78.3" r="3.8" fill="#fff"/><circle cx="90.7" cy="79" r="3.1" fill="#fff"/><circle cx="95.5" cy="85.2" r="3.1" fill="#fff"/><circle cx="12.4" cy="90.7" r="2.4" fill="#fff"/><circle cx="66.6" cy="90.7" r="3.1" fill="#fff"/><circle cx="72.8" cy="89.3" r="3.4" fill="#fff"/><circle cx="33.7" cy="94.8" r="1.4" fill="#fff"/><circle cx="52.2" cy="94.8" r="2.7" fill="#fff"/><circle cx="87.2" cy="95.5" r="3.8" fill="#fff"/><circle cx="70" cy="98.2" r="2.1" fill="#fff"/><circle cx="59" cy="98.2" r="1.4" fill="#fff"/><circle cx="99.6" cy="81" r="1.4" fill="#fff"/><circle cx="102.1" cy="1.4" r="2.7" fill="#fff"/><circle cx="114.4" cy="4.8" r="3.4" fill="#fff"/><circle cx="129.5" cy="4.8" r="2.7" fill="#fff"/><circle cx="152.2" cy="1.4" r="3.4" fill="#fff"/><circle cx="160.4" cy="3.4" r="4.1" fill="#fff"/><circle cx="170.7" cy="1.4" r="4.1" fill="#fff"/><circle cx="153.6" cy="7.6" r="3.4" fill="#fff"/><circle cx="190" cy="6.2" r="2.7" fill="#fff"/><circle cx="102.1" cy="8.9" r="2.4" fill="#fff"/><circle cx="144.6" cy="12.4" r="3.4" fill="#fff"/><circle cx="111" cy="18.5" r="2.1" fill="#fff"/><circle cx="122.7" cy="23.4" r="3.4" fill="#fff"/><circle cx="137.1" cy="21.3" r="4.5" fill="#fff"/><circle cx="155.6" cy="21.3" r="2.4" fill="#fff"/><circle cx="152.2" cy="24" r="1.4" fill="#fff"/><circle cx="176.9" cy="17.2" r="3.1" fill="#fff"/><circle cx="183.1" cy="21.3" r="2.1" fill="#fff"/><circle cx="179.7" cy="24.7" r="1.4" fill="#fff"/><circle cx="194.8" cy="22.7" r="3.8" fill="#fff"/><circle cx="143.3" cy="28.2" r="3.4" fill="#fff"/><circle cx="153.6" cy="30.9" r="3.8" fill="#fff"/><circle cx="111.7" cy="34.3" r="2.4" fill="#fff"/><circle cx="115.4" cy="35.7" r="1.7" fill="#fff"/><circle cx="168.7" cy="33.7" r="2.7" fill="#fff"/><circle cx="177.6" cy="37.1" r="2.4" fill="#fff"/><circle cx="196.8" cy="35" r="3.1" fill="#fff"/><circle cx="192" cy="38.5" r="1.4" fill="#fff"/><circle cx="122" cy="42.6" r="3.4" fill="#fff"/><circle cx="138.5" cy="41.9" r="5.2" fill="#fff"/><circle cx="150.1" cy="41.2" r="3.8" fill="#fff"/><circle cx="160.4" cy="41.2" r="4.1" fill="#fff"/><circle cx="174.2" cy="41.2" r="2.1" fill="#fff"/><circle cx="182.1" cy="43.7" r="3.4" fill="#fff"/><circle cx="105.5" cy="48.8" r="3.4" fill="#fff"/><circle cx="147.4" cy="48.1" r="3.4" fill="#fff"/><circle cx="154.3" cy="51.5" r="3.4" fill="#fff"/><circle cx="165.2" cy="47.4" r="3.8" fill="#fff"/><circle cx="174.2" cy="51.5" r="2.1" fill="#fff"/><circle cx="177.6" cy="54.3" r="2.4" fill="#fff"/><circle cx="192.7" cy="50.8" r="2.4" fill="#fff"/><circle cx="196.2" cy="47.4" r="2.4" fill="#fff"/><circle cx="110.3" cy="57.7" r="3.4" fill="#fff"/><circle cx="117.9" cy="57.7" r="3.8" fill="#fff"/><circle cx="126.1" cy="59.8" r="2.7" fill="#fff"/><circle cx="134.3" cy="63.9" r="2.4" fill="#fff"/><circle cx="163.9" cy="60.4" r="3.4" fill="#fff"/><circle cx="172.1" cy="59.8" r="4.1" fill="#fff"/><circle cx="196.8" cy="60.4" r="2.4" fill="#fff"/><circle cx="108.9" cy="65.9" r="3.4" fill="#fff"/><circle cx="121.3" cy="72.1" r="4.5" fill="#fff"/><circle cx="128.8" cy="68.7" r="3.4" fill="#fff"/><circle cx="141.2" cy="68.7" r="1.7" fill="#fff"/><circle cx="142.6" cy="73.5" r="2.1" fill="#fff"/><circle cx="163.9" cy="68" r="3.8" fill="#fff"/><circle cx="178.3" cy="73.5" r="3.8" fill="#fff"/><circle cx="192" cy="70.7" r="2.1" fill="#fff"/><circle cx="197.5" cy="68.7" r="3.4" fill="#fff"/><circle cx="106.2" cy="73.5" r="3.4" fill="#fff"/><circle cx="102.7" cy="80.4" r="4.1" fill="#fff"/><circle cx="111.7" cy="80.4" r="2.1" fill="#fff"/><circle cx="114.4" cy="78.3" r="1.7" fill="#fff"/><circle cx="144" cy="83.1" r="2.1" fill="#fff"/><circle cx="157" cy="79.7" r="3.1" fill="#fff"/><circle cx="157.7" cy="85.9" r="3.1" fill="#fff"/><circle cx="162.5" cy="90.7" r="3.1" fill="#fff"/><circle cx="176.9" cy="85.9" r="2.4" fill="#fff"/><circle cx="192.7" cy="76.2" r="3.4" fill="#fff"/><circle cx="192.7" cy="85.9" r="3.4" fill="#fff"/><circle cx="113.7" cy="92.7" r="3.8" fill="#fff"/><circle cx="102.7" cy="94.8" r="2.7" fill="#fff"/><circle cx="126.8" cy="91.3" r="2.1" fill="#fff"/><circle cx="128.2" cy="94.8" r="1.7" fill="#fff"/><circle cx="141.9" cy="96.8" r="3.1" fill="#fff"/><circle cx="176.2" cy="93.4" r="3.8" fill="#fff"/><circle cx="187.9" cy="93.4" r="2.7" fill="#fff"/><circle cx="2.7" cy="108.2" r="3.8" fill="#fff"/><circle cx="45.3" cy="105.5" r="2.7" fill="#fff"/><circle cx="52.2" cy="101.4" r="3.1" fill="#fff"/><circle cx="74.2" cy="104.1" r="3.8" fill="#fff"/><circle cx="28.2" cy="105.5" r="1" fill="#fff"/><circle cx="46.7" cy="115.1" r="3.8" fill="#fff"/><circle cx="57.7" cy="113.7" r="1.7" fill="#fff"/><circle cx="65.2" cy="114.4" r="2.4" fill="#fff"/><circle cx="73.5" cy="113.7" r="2.7" fill="#fff"/><circle cx="83.8" cy="114.4" r="4.1" fill="#fff"/><circle cx="90.7" cy="110.3" r="2.4" fill="#fff"/><circle cx="97.5" cy="106.2" r="1.7" fill="#fff"/><circle cx="96.2" cy="119.2" r="2.7" fill="#fff"/><circle cx="27.5" cy="117.9" r="2.7" fill="#fff"/><circle cx="32.3" cy="118.5" r="2.4" fill="#fff"/><circle cx="25.4" cy="124" r="2.7" fill="#fff"/><circle cx="20.6" cy="128.2" r="3.1" fill="#fff"/><circle cx="44" cy="126.1" r="2.7" fill="#fff"/><circle cx="59.1" cy="125.4" r="1.4" fill="#fff"/><circle cx="16.5" cy="134.3" r="1.7" fill="#fff"/><circle cx="54.3" cy="130.9" r="2.7" fill="#fff"/><circle cx="59.8" cy="130.2" r="1.4" fill="#fff"/><circle cx="63.9" cy="130.9" r="2.7" fill="#fff"/><circle cx="84.5" cy="130.2" r="3.1" fill="#fff"/><circle cx="92" cy="127.5" r="1.7" fill="#fff"/><circle cx="92.7" cy="132.3" r="3.1" fill="#fff"/><circle cx="56.3" cy="143.3" r="4.8" fill="#fff"/><circle cx="77.6" cy="141.2" r="3.4" fill="#fff"/><circle cx="79" cy="148.1" r="3.4" fill="#fff"/><circle cx="65.2" cy="148.8" r="4.1" fill="#fff"/><circle cx="4.8" cy="146.7" r="3.1" fill="#fff"/><circle cx="0.7" cy="150.1" r="2.4" fill="#fff"/><circle cx="19.2" cy="147.4" r="1.4" fill="#fff"/><circle cx="19.9" cy="150.1" r="1.4" fill="#fff"/><circle cx="27.5" cy="146.7" r="3.4" fill="#fff"/><circle cx="27.5" cy="153.6" r="2.1" fill="#fff"/><circle cx="47.4" cy="148.1" r="1.7" fill="#fff"/><circle cx="15.8" cy="157" r="3.8" fill="#fff"/><circle cx="61.1" cy="156.3" r="3.1" fill="#fff"/><circle cx="72.8" cy="157.7" r="3.1" fill="#fff"/><circle cx="68.7" cy="161.8" r="2.7" fill="#fff"/><circle cx="78.3" cy="162.5" r="2.1" fill="#fff"/><circle cx="98.9" cy="159.1" r="2.1" fill="#fff"/><circle cx="55.6" cy="163.2" r="4.1" fill="#fff"/><circle cx="41.9" cy="163.2" r="1.4" fill="#fff"/><circle cx="14.4" cy="168.7" r="4.5" fill="#fff"/><circle cx="63.9" cy="168.7" r="4.5" fill="#fff"/><circle cx="10.3" cy="176.9" r="4.8" fill="#fff"/><circle cx="19.2" cy="179.7" r="2.7" fill="#fff"/><circle cx="41.2" cy="179.7" r="3.1" fill="#fff"/><circle cx="47.4" cy="184.5" r="4.1" fill="#fff"/><circle cx="74.9" cy="176.9" r="4.1" fill="#fff"/><circle cx="88.6" cy="174.9" r="3.1" fill="#fff"/><circle cx="96.2" cy="171.4" r="2.1" fill="#fff"/><circle cx="96.2" cy="177.6" r="1.7" fill="#fff"/><circle cx="87.9" cy="181.7" r="2.1" fill="#fff"/><circle cx="22" cy="187.2" r="2.7" fill="#fff"/><circle cx="30.9" cy="187.9" r="2.1" fill="#fff"/><circle cx="28.2" cy="192" r="2.4" fill="#fff"/><circle cx="6.9" cy="194.8" r="3.4" fill="#fff"/><circle cx="13.7" cy="198.6" r="2.7" fill="#fff"/><circle cx="39.1" cy="198.6" r="2.7" fill="#fff"/><circle cx="61.1" cy="196.2" r="3.8" fill="#fff"/><circle cx="95.5" cy="188.6" r="2.4" fill="#fff"/><circle cx="88.6" cy="196.2" r="2.7" fill="#fff"/><circle cx="75.5" cy="197.8" r="1.7" fill="#fff"/><circle cx="106.9" cy="100.7" r="2.7" fill="#fff"/><circle cx="141.2" cy="100.7" r="2.1" fill="#fff"/><circle cx="129.5" cy="106.9" r="3.1" fill="#fff"/><circle cx="148.8" cy="106.9" r="2.1" fill="#fff"/><circle cx="159.8" cy="107.6" r="3.1" fill="#fff"/><circle cx="165.9" cy="107.6" r="3.4" fill="#fff"/><circle cx="180.4" cy="104.1" r="4.1" fill="#fff"/><circle cx="187.9" cy="112.4" r="4.1" fill="#fff"/><circle cx="102.1" cy="115.1" r="3.1" fill="#fff"/><circle cx="116.5" cy="119.2" r="1.7" fill="#fff"/><circle cx="122" cy="116.5" r="1.7" fill="#fff"/><circle cx="132.3" cy="124" r="4.1" fill="#fff"/><circle cx="146.7" cy="123.4" r="1" fill="#fff"/><circle cx="154.3" cy="120.6" r="2.1" fill="#fff"/><circle cx="169.4" cy="119.2" r="2.7" fill="#fff"/><circle cx="173.5" cy="117.9" r="2.4" fill="#fff"/><circle cx="194.8" cy="122" r="4.1" fill="#fff"/><circle cx="106.9" cy="133.7" r="3.4" fill="#fff"/><circle cx="141.9" cy="134.3" r="3.1" fill="#fff"/><circle cx="189.3" cy="133" r="3.1" fill="#fff"/><circle cx="185.2" cy="137.8" r="3.1" fill="#fff"/><circle cx="193.4" cy="141.2" r="1.4" fill="#fff"/><circle cx="134.3" cy="147.4" r="2.4" fill="#fff"/><circle cx="147.4" cy="147.4" r="2.4" fill="#fff"/><circle cx="149.5" cy="153.6" r="2.7" fill="#fff"/><circle cx="179.7" cy="149.5" r="2.7" fill="#fff"/><circle cx="190.7" cy="148.1" r="4.1" fill="#fff"/><circle cx="137.1" cy="156.3" r="2.4" fill="#fff"/><circle cx="102.1" cy="161.1" r="2.4" fill="#fff"/><circle cx="177.6" cy="157" r="2.7" fill="#fff"/><circle cx="173.5" cy="161.8" r="2.7" fill="#fff"/><circle cx="198.2" cy="157.7" r="1.7" fill="#fff"/><circle cx="198.9" cy="162.5" r="1.7" fill="#fff"/><circle cx="154.3" cy="166.6" r="4.5" fill="#fff"/><circle cx="161.8" cy="165.9" r="2.4" fill="#fff"/><circle cx="165.9" cy="171.4" r="3.4" fill="#fff"/><circle cx="172.1" cy="172.1" r="2.7" fill="#fff"/><circle cx="185.2" cy="170" r="4.8" fill="#fff"/><circle cx="106.2" cy="174.2" r="2.7" fill="#fff"/><circle cx="117.9" cy="173.5" r="3.4" fill="#fff"/><circle cx="119.2" cy="179.7" r="3.1" fill="#fff"/><circle cx="153.6" cy="181.7" r="3.1" fill="#fff"/><circle cx="102.7" cy="186.5" r="2.1" fill="#fff"/><circle cx="123.4" cy="188.6" r="2.7" fill="#fff"/><circle cx="137.1" cy="190" r="3.1" fill="#fff"/><circle cx="150.8" cy="190.7" r="4.1" fill="#fff"/><circle cx="163.9" cy="192" r="2.7" fill="#fff"/><circle cx="172.1" cy="192" r="2.7" fill="#fff"/><circle cx="176.2" cy="186.5" r="1.4" fill="#fff"/><circle cx="183.8" cy="188.6" r="2.7" fill="#fff"/><circle cx="190.7" cy="192" r="3.1" fill="#fff"/><circle cx="139.8" cy="196.2" r="3.4" fill="#fff"/><circle cx="101.4" cy="196.2" r="1.7" fill="#fff"/><circle cx="122" cy="198.9" r="2.7" fill="#fff"/><circle cx="185.2" cy="198.2" r="2.1" fill="#fff"/></svg><div class="bl" style="height:331px"></div><div class="bt" style="width:204px"></div><div class="br" style="height:329px"></div><div class="bb" style="width:202px"></div></div>
<div class="node" style="left:567px;top:390px;height:283px"><div class="hdr"><div class="ht" style="letter-spacing:-0.09px">VoronoiTexture</div><svg class="btn" style="left:161px" width="16" height="16"><rect width="16" height="16" fill="#8a8a8a"/><rect width="16" height="1" fill="#555"/><rect width="1" height="16" fill="#555"/><rect y="15" width="16" height="1" fill="#9a9a9a"/><rect x="15" width="1" height="16" fill="#9a9a9a"/><rect x="1" y="1" width="14" height="1" fill="#a4a4a4"/><rect x="1" y="1" width="1" height="14" fill="#a4a4a4"/><rect x="1" y="14" width="14" height="1" fill="#707070"/><rect x="14" y="1" width="1" height="14" fill="#707070"/><rect x="3" y="2" width="9" height="11" fill="#474747"/><rect x="3" y="2" width="9" height="2" fill="#222"/><rect x="4" y="5" width="7" height="1" fill="#959595"/><rect x="4" y="7" width="7" height="1" fill="#959595"/><rect x="4" y="9" width="7" height="1" fill="#959595"/><rect x="4" y="11" width="7" height="1" fill="#959595"/></svg><svg class="btn" style="left:182px" width="16" height="16"><rect width="16" height="16" fill="#8a8a8a"/><rect width="16" height="1" fill="#555"/><rect width="1" height="16" fill="#555"/><rect y="15" width="16" height="1" fill="#9a9a9a"/><rect x="15" width="1" height="16" fill="#9a9a9a"/><rect x="1" y="1" width="14" height="1" fill="#a4a4a4"/><rect x="1" y="1" width="1" height="14" fill="#a4a4a4"/><rect x="1" y="14" width="14" height="1" fill="#707070"/><rect x="14" y="1" width="1" height="14" fill="#707070"/><defs><linearGradient id="eg" x1="0" y1="0" x2="1" y2="1"><stop offset="0" stop-color="#a6a6a6"/><stop offset="1" stop-color="#868686"/></linearGradient></defs><rect x="2" y="2" width="12" height="12" fill="url(#eg)"/><path d="M2,5.2 Q7,1.6 13.4,4.2" fill="none" stroke="#4c4c4c" stroke-width="1.3"/><path d="M4.3,11.3 Q8.5,12.6 12.4,10.3" fill="none" stroke="#303030" stroke-width="1.5"/><ellipse cx="8.5" cy="8.5" rx="4" ry="2.5" fill="#7e7e7e" opacity="0.5"/></svg></div><div class="row big" style="top:24px;height:20px"><div class="sd"></div><svg class="ic" style="left:1px;top:1.0px" width="20" height="16" viewBox="-10 -8 20 16"><use href="#so"/></svg><div class="bt13" style="left:23px;top:2px">Distance</div></div><div class="row big" style="top:44px;height:21px"><div class="sl"></div><div class="sd"></div><svg class="ic" style="left:1px;top:2.0px" width="20" height="16" viewBox="-10 -8 20 16"><use href="#so"/></svg><div class="bt13" style="left:23px;top:3px">Color</div></div><div class="row big" style="top:65px;height:21px"><div class="sl"></div><div class="sd"></div><svg class="ic" style="left:1px;top:2.0px" width="20" height="16" viewBox="-10 -8 20 16"><use href="#so"/></svg><div class="bt13" style="left:23px;top:3px">Position</div></div><div class="row big" style="top:86px;height:21px"><div class="sl"></div><div class="sd"></div><svg class="ic" style="left:1px;top:2.0px" width="20" height="16" viewBox="-10 -8 20 16"><use href="#so"/></svg><div class="bt13" style="left:23px;top:3px">W</div></div><div class="row big" style="top:107px;height:21px"><div class="sl"></div><div class="sd"></div><svg class="ic" style="left:1px;top:2.0px" width="20" height="16" viewBox="-10 -8 20 16"><use href="#so"/></svg><div class="bt13" style="left:23px;top:3px">Radius</div></div><div class="row small" style="top:128px;height:17px"><div class="sl"></div><div class="sd"></div><div class="st11" style="left:2px;top:1px">Vector</div><svg class="ic" style="left:182.6px;top:1.9000000000000004px" width="16" height="14" viewBox="-8 -7 16 14"><use href="#si"/></svg></div><div class="row small" style="top:145px;height:17px"><div class="sl"></div><div class="sd"></div><div class="st11" style="left:2px;top:1px">W</div><svg class="ic" style="left:116px;top:4.5px" width="17" height="8" viewBox="0 0 17 8"><use href="#key"/></svg><div class="st11" style="left:135px;top:2px">0.000000</div><svg class="ic" style="left:183.9px;top:1.8000000000000007px" width="16" height="14" viewBox="-8 -7 16 14"><use href="#su"/></svg></div><div class="row small" style="top:162px;height:17px"><div class="sl"></div><div class="sd"></div><div class="st11" style="left:2px;top:1px">Scale</div><svg class="ic" style="left:182.6px;top:1.9000000000000004px" width="16" height="14" viewBox="-8 -7 16 14"><use href="#si"/></svg></div><div class="row small" style="top:179px;height:17px"><div class="sl"></div><div class="sd"></div><div class="st11" style="left:2px;top:1px">Smoothness</div><svg class="ic" style="left:182.6px;top:1.9000000000000004px" width="16" height="14" viewBox="-8 -7 16 14"><use href="#si"/></svg></div><div class="row small" style="top:196px;height:17px"><div class="sl"></div><div class="sd"></div><div class="st11" style="left:2px;top:1px">Exponent</div><svg class="ic" style="left:182.6px;top:1.9000000000000004px" width="16" height="14" viewBox="-8 -7 16 14"><use href="#si"/></svg></div><div class="row small" style="top:213px;height:17px"><div class="sl"></div><div class="sd"></div><div class="st11" style="left:2px;top:1px">Randomness</div><svg class="ic" style="left:182.6px;top:1.9000000000000004px" width="16" height="14" viewBox="-8 -7 16 14"><use href="#si"/></svg></div><div class="row small" style="top:230px;height:17px"><div class="sl"></div><div class="sd"></div><div class="st11" style="left:2px;top:1px">Dimensions</div><svg class="ic" style="left:135.4px;top:5px" width="11" height="8"><path d="M0,0 L9.8,0 L4.9,7 Z" fill="#f0f0f0"/></svg><div class="st11" style="left:146px;top:1px;color:#f4f4f4">3D</div></div><div class="row small" style="top:247px;height:17px"><div class="sl"></div><div class="sd"></div><div class="st11" style="left:2px;top:1px;color:#d0d0d0">Distance Metric</div><svg class="ic" style="left:135.4px;top:5px" width="11" height="8"><path d="M0,0 L9.8,0 L4.9,7 Z" fill="#f0f0f0"/></svg><div class="st11" style="left:146px;top:1px;color:#e2e2e2">euclidean</div></div><div class="row small" style="top:264px;height:17px"><div class="sl"></div><div class="sd"></div><div class="st11" style="left:2px;top:1px">Feature</div><svg class="ic" style="left:135.4px;top:5px" width="11" height="8"><path d="M0,0 L9.8,0 L4.9,7 Z" fill="#f0f0f0"/></svg><div class="st11" style="left:146px;top:1px;color:#f4f4f4">n_sphere_</div></div><div class="bl" style="height:283px"></div><div class="bt" style="width:204px"></div><div class="br" style="height:281px"></div><div class="bb" style="width:202px"></div></div>
<div class="node" style="left:832px;top:460px;height:193px"><div class="hdr"><div class="ht" style="letter-spacing:0.06px">TextureCoordinate</div><svg class="btn" style="left:161px" width="16" height="16"><rect width="16" height="16" fill="#8a8a8a"/><rect width="16" height="1" fill="#555"/><rect width="1" height="16" fill="#555"/><rect y="15" width="16" height="1" fill="#9a9a9a"/><rect x="15" width="1" height="16" fill="#9a9a9a"/><rect x="1" y="1" width="14" height="1" fill="#a4a4a4"/><rect x="1" y="1" width="1" height="14" fill="#a4a4a4"/><rect x="1" y="14" width="14" height="1" fill="#707070"/><rect x="14" y="1" width="1" height="14" fill="#707070"/><rect x="3" y="2" width="9" height="11" fill="#474747"/><rect x="3" y="2" width="9" height="2" fill="#222"/><rect x="4" y="5" width="7" height="1" fill="#959595"/><rect x="4" y="7" width="7" height="1" fill="#959595"/><rect x="4" y="9" width="7" height="1" fill="#959595"/><rect x="4" y="11" width="7" height="1" fill="#959595"/></svg><svg class="btn" style="left:182px" width="16" height="16"><rect width="16" height="16" fill="#8a8a8a"/><rect width="16" height="1" fill="#555"/><rect width="1" height="16" fill="#555"/><rect y="15" width="16" height="1" fill="#9a9a9a"/><rect x="15" width="1" height="16" fill="#9a9a9a"/><rect x="1" y="1" width="14" height="1" fill="#a4a4a4"/><rect x="1" y="1" width="1" height="14" fill="#a4a4a4"/><rect x="1" y="14" width="14" height="1" fill="#707070"/><rect x="14" y="1" width="1" height="14" fill="#707070"/><defs><linearGradient id="eg" x1="0" y1="0" x2="1" y2="1"><stop offset="0" stop-color="#a6a6a6"/><stop offset="1" stop-color="#868686"/></linearGradient></defs><rect x="2" y="2" width="12" height="12" fill="url(#eg)"/><path d="M2,5.2 Q7,1.6 13.4,4.2" fill="none" stroke="#4c4c4c" stroke-width="1.3"/><path d="M4.3,11.3 Q8.5,12.6 12.4,10.3" fill="none" stroke="#303030" stroke-width="1.5"/><ellipse cx="8.5" cy="8.5" rx="4" ry="2.5" fill="#7e7e7e" opacity="0.5"/></svg></div><div class="row big" style="top:24px;height:20px"><div class="sd"></div><svg class="ic" style="left:1px;top:1.0px" width="20" height="16" viewBox="-10 -8 20 16"><use href="#so"/></svg><div class="bt13" style="left:23px;top:2px">Generated</div></div><div class="row big" style="top:44px;height:21px"><div class="sl"></div><div class="sd"></div><svg class="ic" style="left:1px;top:2.0px" width="20" height="16" viewBox="-10 -8 20 16"><use href="#so"/></svg><div class="bt13" style="left:23px;top:3px">Normal</div></div><div class="row big" style="top:65px;height:21px"><div class="sl"></div><div class="sd"></div><svg class="ic" style="left:1px;top:2.0px" width="20" height="16" viewBox="-10 -8 20 16"><use href="#so"/></svg><div class="bt13" style="left:23px;top:3px">UV</div></div><div class="row big" style="top:86px;height:21px"><div class="sl"></div><div class="sd"></div><svg class="ic" style="left:1px;top:2.0px" width="20" height="16" viewBox="-10 -8 20 16"><use href="#so"/></svg><div class="bt13" style="left:23px;top:3px">Object</div></div><div class="row big" style="top:107px;height:21px"><div class="sl"></div><div class="sd"></div><svg class="ic" style="left:1px;top:2.0px" width="20" height="16" viewBox="-10 -8 20 16"><use href="#so"/></svg><div class="bt13" style="left:23px;top:3px">Camera</div></div><div class="row big" style="top:128px;height:21px"><div class="sl"></div><div class="sd"></div><svg class="ic" style="left:1px;top:2.0px" width="20" height="16" viewBox="-10 -8 20 16"><use href="#so"/></svg><div class="bt13" style="left:23px;top:3px">Window</div></div><div class="row big" style="top:149px;height:21px"><div class="sl"></div><div class="sd"></div><svg class="ic" style="left:1px;top:2.0px" width="20" height="16" viewBox="-10 -8 20 16"><use href="#so"/></svg><div class="bt13" style="left:23px;top:3px">Reflection</div></div><div class="row big" style="top:170px;height:21px"><div class="sl"></div><div class="sd"></div><svg class="ic" style="left:1px;top:2.0px" width="20" height="16" viewBox="-10 -8 20 16"><use href="#so"/></svg><div class="bt13" style="left:23px;top:3px">PoserWindow</div></div><div class="bl" style="height:193px"></div><div class="bt" style="width:204px"></div><div class="br" style="height:191px"></div><div class="bb" style="width:202px"></div></div>
<div class="abs" style="left:566px;top:291px;width:209px;height:16px;border:3px solid #f7aa00;box-shadow:0 0 0 1px rgba(30,30,40,0.35), inset 0 0 0 1px rgba(20,20,30,0.45)"></div>
<div class="abs" style="left:563px;top:620px;width:209px;height:14px;border:3px solid #f7aa00;box-shadow:0 0 0 1px rgba(30,30,40,0.35), inset 0 0 0 1px rgba(20,20,30,0.45)"></div>
<div class="abs" style="left:827px;top:543px;width:204px;height:26px;border:3px solid #f7aa00;box-shadow:0 0 0 1px rgba(30,30,40,0.35), inset 0 0 0 1px rgba(20,20,30,0.45)"></div>
<svg class="abs" style="left:417px;top:289px" width="16" height="20"><path d="M1.5,1.5 L1.5,15.5 L5,12 L12.5,11.5 Z" fill="#fff"/><path d="M1.5,1 L1.5,15.5" stroke="#000" stroke-width="1"/><path d="M1.5,1.5 L12.5,11.5" stroke="#000" stroke-width="0.9"/><rect x="7" y="12" width="1" height="1" fill="#000"/><rect x="6" y="14" width="1" height="1" fill="#000"/><rect x="8" y="14" width="1" height="1" fill="#000"/><rect x="7" y="16" width="1" height="1" fill="#000"/><rect x="9" y="16" width="1" height="1" fill="#000"/></svg>
</body></html>
